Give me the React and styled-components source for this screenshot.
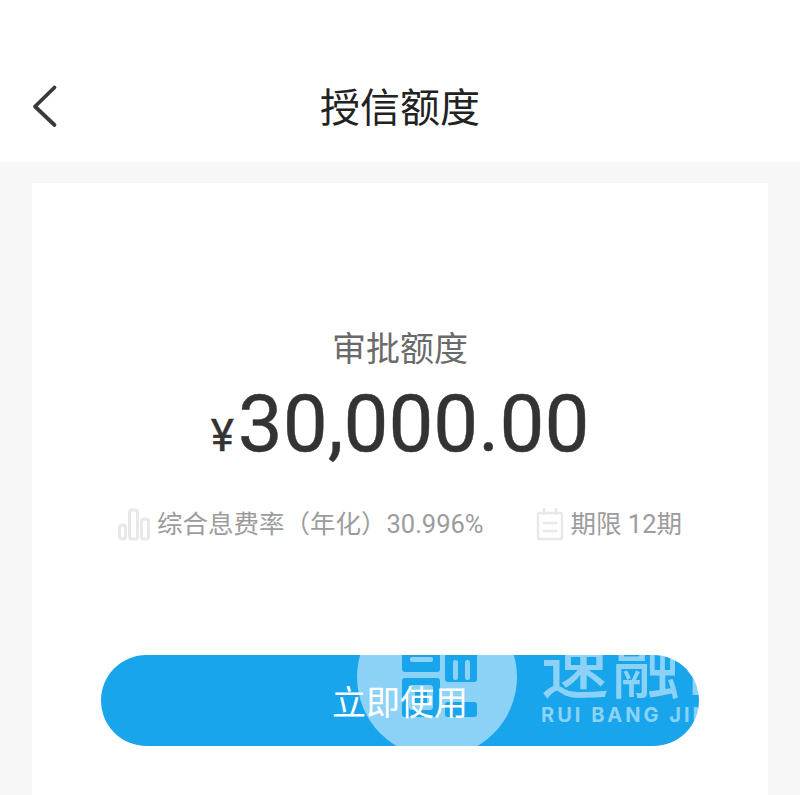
import React from "react";
import styled, { createGlobalStyle } from "styled-components";

const Global = createGlobalStyle`
  html, body { margin: 0; padding: 0; background: #f7f7f7; }
  body { font-family: Roboto, "Noto Sans CJK SC", sans-serif; }
`;
const Page = styled.div`
  position: relative; width: 800px; height: 795px; overflow: hidden;
  display: flex; flex-direction: column; background: #f7f7f7;
`;
const Header = styled.header`
  height: 162px; flex: none; box-sizing: border-box; padding-top: 77px; background: #fff;
  display: grid; grid-template-columns: 32px 28px 1fr 60px; align-items: start;
`;
const Back = styled.svg` grid-column: 2; width: 28px; height: 44px; margin-top: 7px; `;
const Title = styled.h1`
  grid-column: 3; margin: 0; text-align: center; font-weight: 400; font-size: 40px; line-height: 56px;
  color: #222; font-family: "Noto Sans CJK SC", sans-serif;
`;
const Card = styled.main`
  flex: 1; margin: 21px 32px 0; background: #fff; display: flex; flex-direction: column; align-items: center;
  padding-top: 140px;
`;
const Label = styled.div`
  font-size: 34px; line-height: 48px; color: #6a6a6a; font-family: "Noto Sans CJK SC", sans-serif;
`;
const Amount = styled.div`
  display: flex; align-items: baseline; margin-top: 11px; color: #333; line-height: 84px; font-size: 80px; font-family: Roboto, sans-serif;
  -webkit-text-stroke: 0.4px #333;
`;
const Yen = styled.span` font-size: 44px; margin-right: 4px; `;
const Meta = styled.div`
  display: flex; margin-top: 26px; gap: 52px; color: #9c9c9c; font-size: 25.5px; line-height: 40px; font-family: Roboto, "Noto Sans CJK SC", sans-serif;
`;
const MetaItem = styled.div` display: flex; align-items: center; gap: 7px; `;
const MetaIcon = styled.svg` width: ${(p) => p.$w}px; height: 34px; flex: none; `;
const Action = styled.button`
  margin-top: 111px; width: 598px; height: 91px; border: 0; border-radius: 46px; background: #19a5ec; color: #fff;
  font-size: 34px; font-family: "Noto Sans CJK SC", sans-serif; padding: 0;
`;
const Watermark = styled.div`
  position: absolute; left: 357px; top: 597px; display: flex; gap: 24px; color: rgba(255,255,255,.5); pointer-events: none;
`;
const Seal = styled.svg` width: 160px; height: 160px; flex: none; `;
const Brand = styled.div` display: flex; flex-direction: column; padding-top: 28px; white-space: nowrap; `;
const BrandName = styled.div` font-size: 68px; line-height: 78px; font-weight: 500; letter-spacing: 3px; font-family: "Noto Sans CJK SC", sans-serif; `;
const BrandEn = styled.div` font-size: 20px; line-height: 24px; font-weight: 700; letter-spacing: 3px; font-family: Inter, sans-serif; `;

const r = (x, y, w, h, c = 3) =>
  `M${x + c} ${y}H${x + w - c}Q${x + w} ${y} ${x + w} ${y + c}V${y + h - c}Q${x + w} ${y + h} ${x + w - c} ${y + h}H${x + c}Q${x} ${y + h} ${x} ${y + h - c}V${y + c}Q${x} ${y} ${x + c} ${y}Z`;
const sealPath = [
  "M80 0A80 80 0 1 1 80 160A80 80 0 1 1 80 0Z",
  r(45, 20, 38, 55), r(53, 60, 23, 5, 2),
  r(88, 20, 32, 65), r(96, 63, 5, 20, 2), r(108, 63, 5, 20, 2),
  r(45, 81, 38, 39), r(52, 88, 24, 25), r(58, 94, 12, 14, 1),
  r(88, 105, 32, 15),
].join("");

export default function App() {
  return (
    <Page>
      <Global />
      <Header>
        <Back viewBox="0 0 28 44"><path d="M22.5 3.5 L3 22.5 L22.5 41" fill="none" stroke="#3a3a3a" strokeWidth="3.8" strokeLinecap="round" strokeLinejoin="round" /></Back>
        <Title>授信额度</Title>
      </Header>
      <Card>
        <Label>审批额度</Label>
        <Amount><Yen>¥</Yen>30,000.00</Amount>
        <Meta>
          <MetaItem>
            <MetaIcon $w={32} viewBox="0 0 32 34"><g fill="none" stroke="#e8e8e8" strokeWidth="3"><rect x="1.5" y="18" width="6" height="14" rx="2.5"/><rect x="11.5" y="3" width="8" height="29" rx="2.5"/><rect x="23.5" y="12" width="7" height="20" rx="2.5"/></g></MetaIcon>
            综合息费率（年化）30.996%
          </MetaItem>
          <MetaItem>
            <MetaIcon $w={28} viewBox="0 0 28 34"><g fill="none" stroke="#e8e8e8" strokeWidth="2.5"><rect x="2" y="6" width="24" height="26" rx="1.5"/><path d="M8 1v7M20 1v7M7 16h14M7 24h14"/></g></MetaIcon>
            期限 12期
          </MetaItem>
        </Meta>
        <Action>立即使用</Action>
      </Card>
      <Watermark>
        <Seal viewBox="0 0 160 160"><path d={sealPath} fillRule="evenodd" fill="currentColor" /></Seal>
        <Brand><BrandName>速融帮</BrandName><BrandEn>RUI BANG JIN</BrandEn></Brand>
      </Watermark>
    </Page>
  );
}
